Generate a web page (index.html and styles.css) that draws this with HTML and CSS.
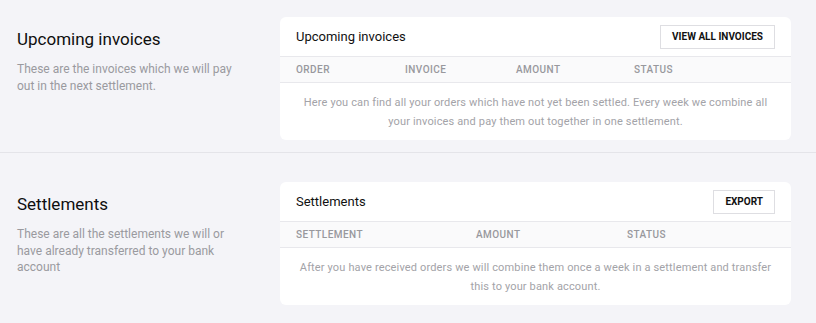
FILE: index.html
```html
<!DOCTYPE html>
<html lang="en">
<head>
<meta charset="utf-8">
<title>Payouts</title>
<link rel="stylesheet" href="styles.css">
</head>
<body>
<section class="section section-first">
  <div class="intro">
    <h2 class="intro-title">Upcoming invoices</h2>
    <p class="intro-text">These are the invoices which we will pay out in the next settlement.</p>
  </div>
  <div class="card">
    <div class="card-head">
      <h3 class="card-title">Upcoming invoices</h3>
      <button class="btn">VIEW ALL INVOICES</button>
    </div>
    <div class="thead thead-invoices">
      <span>ORDER</span><span>INVOICE</span><span>AMOUNT</span><span>STATUS</span>
    </div>
    <p class="empty">Here you can find all your orders which have not yet been settled. Every week we combine all your invoices and pay them out together in one settlement.</p>
  </div>
</section>
<section class="section section-last">
  <div class="intro">
    <h2 class="intro-title">Settlements</h2>
    <p class="intro-text">These are all the settlements we will or have already transferred to your bank account</p>
  </div>
  <div class="card">
    <div class="card-head">
      <h3 class="card-title">Settlements</h3>
      <button class="btn">EXPORT</button>
    </div>
    <div class="thead thead-settlements">
      <span>SETTLEMENT</span><span>AMOUNT</span><span>STATUS</span>
    </div>
    <p class="empty">After you have received orders we will combine them once a week in a settlement and transfer this to your bank account.</p>
  </div>
</section>
</body>
</html>
```
FILE: styles.css
```css
* { box-sizing: border-box; }
body {
  margin: 0;
  background: #f4f4f8;
  font-family: Roboto, "Noto Sans", sans-serif;
  color: #111;
}
.section {
  display: flex;
  justify-content: space-between;
  padding: 29px 25px 12px 17px;
  border-bottom: 1px solid #e4e4e9;
}
.section-first { padding-top: 17px; }
.section-last { border-bottom: 0; }
.intro { width: 226px; padding-top: 11px; }
.intro-title {
  margin: 0;
  font-size: 17px;
  font-weight: 400;
  line-height: 22px;
  color: #0e0e0e;
}
.intro-text {
  margin: 11px 0 0;
  font-size: 12px;
  line-height: 16.5px;
  color: #9a9a9f;
}
.card {
  width: 511px;
  background: #fff;
  border-radius: 6px;
  overflow: hidden;
}
.card-head {
  height: 40px;
  display: flex;
  align-items: center;
  justify-content: space-between;
  padding: 0 16px;
  border-bottom: 1px solid #e8e8ec;
}
.card-title {
  margin: 0;
  font-size: 13px;
  font-weight: 400;
  color: #111;
}
.btn {
  height: 24px;
  padding: 0 11px;
  background: #fff;
  border: 1px solid #dedee2;
  font-family: inherit;
  font-size: 10px;
  font-weight: 700;
  color: #111;
}
.thead {
  height: 26px;
  display: grid;
  align-items: center;
  padding: 0 16px;
  background: #fafafb;
  border-bottom: 1px solid #e8e8ec;
  font-size: 10px;
  font-weight: 500;
  letter-spacing: 0.45px;
  color: #98989d;
}
.thead-invoices { grid-template-columns: 109px 111px 118px 1fr; }
.thead-settlements { grid-template-columns: 180px 151px 1fr; }
.empty {
  margin: 0;
  padding: 9.5px 18px;
  text-align: center;
  font-size: 11px;
  line-height: 19px;
  letter-spacing: 0.15px;
  color: #a3a3a8;
}
```
